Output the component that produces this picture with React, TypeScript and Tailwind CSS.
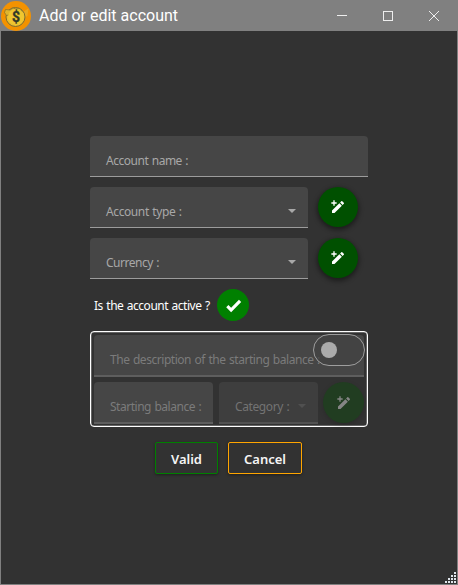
import React from "react";

const font = "font-['Noto_Sans','Open_Sans',sans-serif]";

function PencilPlus() {
  return (
    <svg viewBox="0 0 24 24" className="h-4 w-4" fill="currentColor">
      <path d="M3 17.25V21h3.75L17.81 9.94l-3.75-3.75L3 17.25z M20.71 7.04a1 1 0 0 0 0-1.41l-2.34-2.34a1 1 0 0 0-1.41 0l-1.83 1.83 3.75 3.75 1.83-1.83z" />
      <path d="M7 2v3h3v2H7v3H5V7H2V5h3V2z" />
    </svg>
  );
}

function AddButton() {
  return (
    <button className="mr-[10px] flex h-10 w-10 items-center justify-center rounded-full bg-[#005000] text-white shadow-[0_2px_5px_1px_rgba(0,0,0,0.45)]">
      <PencilPlus />
    </button>
  );
}

function Arrow() {
  return (
    <svg viewBox="0 0 8 4" className="h-1 w-2 shrink-0" fill="currentColor">
      <path d="M0 0h8L4 4z" />
    </svg>
  );
}

function Field({ label, spacing, select }: { label: string; spacing: string; select?: boolean }) {
  return (
    <div className="flex h-[41px] flex-1 items-start justify-between rounded-t border-b border-[#9c9c9c] bg-[#464646] pr-3 pl-4 text-[#a8a8a8]">
      <span className={`mt-4 text-[12px] leading-[17px] whitespace-nowrap ${spacing}`}>{label}</span>
      {select && <span className="mt-[22px] flex"><Arrow /></span>}
    </div>
  );
}

function Logo() {
  return (
    <svg viewBox="0 0 30 30" className="h-[30px] w-[30px]">
      <circle cx="15" cy="15" r="15" fill="#f39200" />
      <path d="M20 12l7.500-4.500-1 7-4 4z" fill="#e9a81f" />
      <circle cx="14.500" cy="16" r="9.500" fill="#e8bd30" stroke="#6e6430" strokeWidth=".9" />
      <path d="M4.500 8.500l4.500.5 3-2 3 1 4-.5 2.500 3-16 4-2-3z" fill="#dfb52e" stroke="#7d6f30" strokeWidth=".7" />
      <circle cx="15" cy="16" r="8" fill="#f0c62f" />
      <text x="15" y="21" textAnchor="middle" fontFamily="Roboto, sans-serif" fontWeight="700" fontSize="14" fill="#333827" stroke="#333827" strokeWidth=".3">$</text>
    </svg>
  );
}

const gripRows = [1, 2, 3, 4];

export default function App() {
  return (
    <div className={`flex h-[585px] w-[458px] flex-col border-x border-b border-[#808080] bg-[#323232] ${font}`}>
      <header className="flex h-[31px] shrink-0 items-center bg-[#808080] text-white">
        <Logo />
        <h1 className="ml-2 font-[Roboto,sans-serif] text-[16px] leading-5 whitespace-nowrap">Add or edit account</h1>
        <svg viewBox="0 0 104 12" className="mr-[16px] ml-auto h-3 w-[104px]" fill="none" stroke="#eeeeee" shapeRendering="crispEdges">
          <path d="M0 5.500h10M46.500 1.500h9v9h-9z" />
          <path d="M92 1l10 10M102 1L92 11" shapeRendering="auto" />
        </svg>
      </header>

      <main className="ml-[89px] flex w-[278px] flex-col pt-[105px] [word-spacing:0.8px]">
        <div className="flex"><Field label="Account name :" spacing="tracking-[-0.48px]" /></div>
        <div className="mt-[10px] flex gap-[10px]"><Field label="Account type :" spacing="tracking-[-0.4px]" select /><AddButton /></div>
        <div className="mt-[10px] flex gap-[10px]"><Field label="Currency :" spacing="tracking-[-0.48px]" select /><AddButton /></div>

        <div className="mt-[10px] flex h-8 items-center pl-1 text-white">
          <span className="w-[123px] text-[12px] leading-[17px] tracking-[-0.48px] whitespace-nowrap">Is the account active ?</span>
          <span className="flex h-8 w-8 items-center justify-center rounded-full bg-[#008000]">
            <svg viewBox="0 0 24 24" className="h-[19px] w-[19px]" fill="white">
              <path d="M9 20.420L2.790 14.210l2.830-2.830L9 14.770l9.880-9.890 2.830 2.830z" />
            </svg>
          </span>
        </div>

        <section className="relative mt-[10px] h-24 rounded border border-white px-[3px] pt-[3px] shadow-[inset_0_0_0_0.5px_rgba(255,255,255,0.5)]">
          <div className="h-[42px] rounded-t border-b-2 border-[#5e5e5e] bg-[#464646] pt-4 pl-4 text-[12px] leading-[17px] tracking-[-0.46px] whitespace-nowrap text-[#7b7b7b]">
            The description of the starting balance :
          </div>
          <div className="mt-[5px] flex">
            <div className="h-[42px] w-[119px] rounded-t border-b-2 border-[#5e5e5e] bg-[#464646] pt-4 pl-4 text-[12px] leading-[17px] tracking-[-0.48px] whitespace-nowrap text-[#7b7b7b]">
              Starting balance :
            </div>
            <div className="ml-[6px] flex h-[42px] w-[99px] items-start justify-between rounded-t border-b-2 border-[#525252] bg-[#3e3e3e] pr-3 pl-4 text-[#737373]">
              <span className="mt-4 text-[12px] leading-[17px] tracking-[-0.4px] whitespace-nowrap">Category :</span>
              <span className="mt-[22px] flex text-[#505050]"><Arrow /></span>
            </div>
            <div className="ml-[5px] flex h-[41px] w-[41px] items-center justify-center rounded-full bg-[#213d21] text-[#858585] shadow-[0_2px_5px_rgba(0,0,0,0.15)]">
              <PencilPlus />
            </div>
          </div>
          <span className="absolute top-[2px] right-[2px] flex h-8 w-[52px] items-center rounded-full border border-[#9e9e9e] bg-[#424242]/70 pl-[7px]">
            <span className="h-4 w-4 rounded-full bg-[#ababab]" />
          </span>
        </section>

        <div className="mt-[15px] ml-[65px] flex gap-[10px] text-[13px] font-semibold text-[#f5f5f5]">
          <button className="h-8 w-[63px] rounded-xs border border-[#008000] pt-[3px] shadow-[0_1px_3px_rgba(0,0,0,0.4)]">Valid</button>
          <button className="h-8 w-[74px] rounded-xs border border-[#ffa500] pt-[3px] shadow-[0_1px_3px_rgba(0,0,0,0.4)]">Cancel</button>
        </div>
      </main>

      <div className="mt-auto mr-px mb-px flex flex-col items-end gap-px">
        {gripRows.map((n) => (
          <div key={n} className="flex gap-px">
            {gripRows.slice(0, n).map((k) => (
              <span key={k} className="h-[2px] w-[2px] bg-[#dfe5eb]" />
            ))}
          </div>
        ))}
      </div>
    </div>
  );
}
